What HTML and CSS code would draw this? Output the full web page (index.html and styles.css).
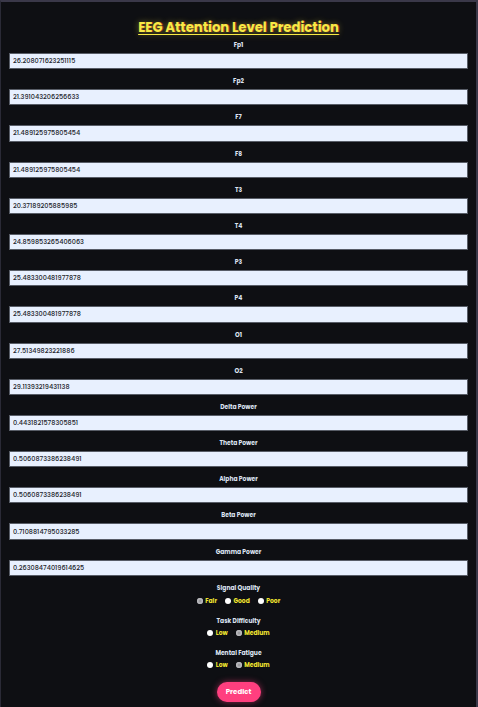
FILE: index.html
```html
<!DOCTYPE html>
<html>
<head>
<meta charset="utf-8">
<link rel="stylesheet" href="styles.css">
</head>
<body>
<div class="frame">
  <h1 class="title">EEG Attention Level Prediction</h1>
  <form class="form">
    <label class="lbl">Fp1</label><input class="inp" value="26.208071623251115">
    <label class="lbl">Fp2</label><input class="inp" value="21.391043206256633">
    <label class="lbl">F7</label><input class="inp" value="21.489125975805454">
    <label class="lbl">F8</label><input class="inp" value="21.489125975805454">
    <label class="lbl">T3</label><input class="inp" value="20.37189205885985">
    <label class="lbl">T4</label><input class="inp" value="24.859853265406063">
    <label class="lbl">P3</label><input class="inp" value="25.483300481977878">
    <label class="lbl">P4</label><input class="inp" value="25.483300481977878">
    <label class="lbl">O1</label><input class="inp" value="27.51349823221886">
    <label class="lbl">O2</label><input class="inp" value="29.11393219431138">
    <label class="lbl">Delta Power</label><input class="inp" value="0.4431821578305851">
    <label class="lbl">Theta Power</label><input class="inp" value="0.5060873386238491">
    <label class="lbl">Alpha Power</label><input class="inp" value="0.5060873386238491">
    <label class="lbl">Beta Power</label><input class="inp" value="0.7108814795033285">
    <label class="lbl">Gamma Power</label><input class="inp" value="0.26308474019614625">

    <div class="group first">
      <div class="lbl">Signal Quality</div>
      <div class="opts">
        <label class="opt"><input type="radio" name="sq" checked><span>Fair</span></label>
        <label class="opt"><input type="radio" name="sq"><span>Good</span></label>
        <label class="opt"><input type="radio" name="sq"><span>Poor</span></label>
      </div>
    </div>
    <div class="group">
      <div class="lbl">Task Difficulty</div>
      <div class="opts">
        <label class="opt"><input type="radio" name="td"><span>Low</span></label>
        <label class="opt"><input type="radio" name="td" checked><span>Medium</span></label>
      </div>
    </div>
    <div class="group">
      <div class="lbl">Mental Fatigue</div>
      <div class="opts">
        <label class="opt"><input type="radio" name="mf"><span>Low</span></label>
        <label class="opt"><input type="radio" name="mf" checked><span>Medium</span></label>
      </div>
    </div>
    <div class="btnrow"><button type="button" class="btn">Predict</button></div>
  </form>
</div>
</body>
</html>
```
FILE: styles.css
```css
* { box-sizing: border-box; }
html, body { margin: 0; padding: 0; background: #0e0f13; }
body { font-family: "Poppins", "Open Sans", "Noto Sans", sans-serif; }
.frame {
  width: 478px;
  height: 707px;
  overflow: hidden;
  background: #0e0f13;
  border-top: 2px solid #3a3849;
  border-left: 1px solid #2a2a36;
  border-right: 2px solid #3a3849;
  padding: 0 8px 0 8px;
}
.title {
  margin: 18px 0 0 0;
  text-align: center;
  font-size: 13.2px;
  line-height: 16px;
  font-weight: 700;
  color: #f7ea45;
  text-decoration: underline;
  text-decoration-thickness: 1px;
  text-underline-offset: 2px;
  text-shadow: 0 0 6px rgba(255, 235, 80, 0.45), 1px 0 0 rgba(220, 40, 40, 0.6);
}
.form { display: flex; flex-direction: column; }
.lbl {
  display: block;
  text-align: center;
  font-size: 6px;
  line-height: 8px;
  font-weight: 700;
  color: #dde4f2;
  margin: 8px 0 4px 0;
}
.form > .lbl:first-child { margin-top: 5px; }
.inp {
  display: block;
  width: 459px;
  height: 16.2px;
  margin: 0;
  padding: 0 3px;
  border: 1px solid #585d67;
  background: #e8f0fe;
  color: #1b1d2a;
  font-family: "Poppins", "Open Sans", "Noto Sans", sans-serif;
  font-size: 6.5px;
  font-weight: 500;
  outline: none;
}
.group { display: flex; flex-direction: column; align-items: center; }
.group .lbl { margin: 12px 0 4px 0; }
.group.first .lbl { margin: 8.5px 0 5px 0; }
.opts { display: flex; justify-content: center; align-items: center; gap: 8px; height: 8px; }
.opt { display: flex; align-items: center; gap: 2.5px; font-size: 6px; font-weight: 700; color: #f2e630; }
.opt input {
  appearance: none;
  -webkit-appearance: none;
  width: 6px;
  height: 6px;
  margin: 0;
  border-radius: 50%;
  background: #ffffff;
  border: none;
}
.opt input:checked { background: #9b9b9f; box-shadow: inset 0 0 0 1.5px #b8b8bc; }
.btnrow { display: flex; justify-content: center; margin-top: 13px; }
.btn {
  width: 44px;
  height: 20px;
  border: none;
  border-radius: 10px;
  background: #ff3f7f;
  color: #ffffff;
  font-family: "Poppins", "Open Sans", "Noto Sans", sans-serif;
  font-size: 7px;
  font-weight: 700;
  padding: 0;
  box-shadow: 0 0 6px rgba(255, 63, 127, 0.55);
}
```
